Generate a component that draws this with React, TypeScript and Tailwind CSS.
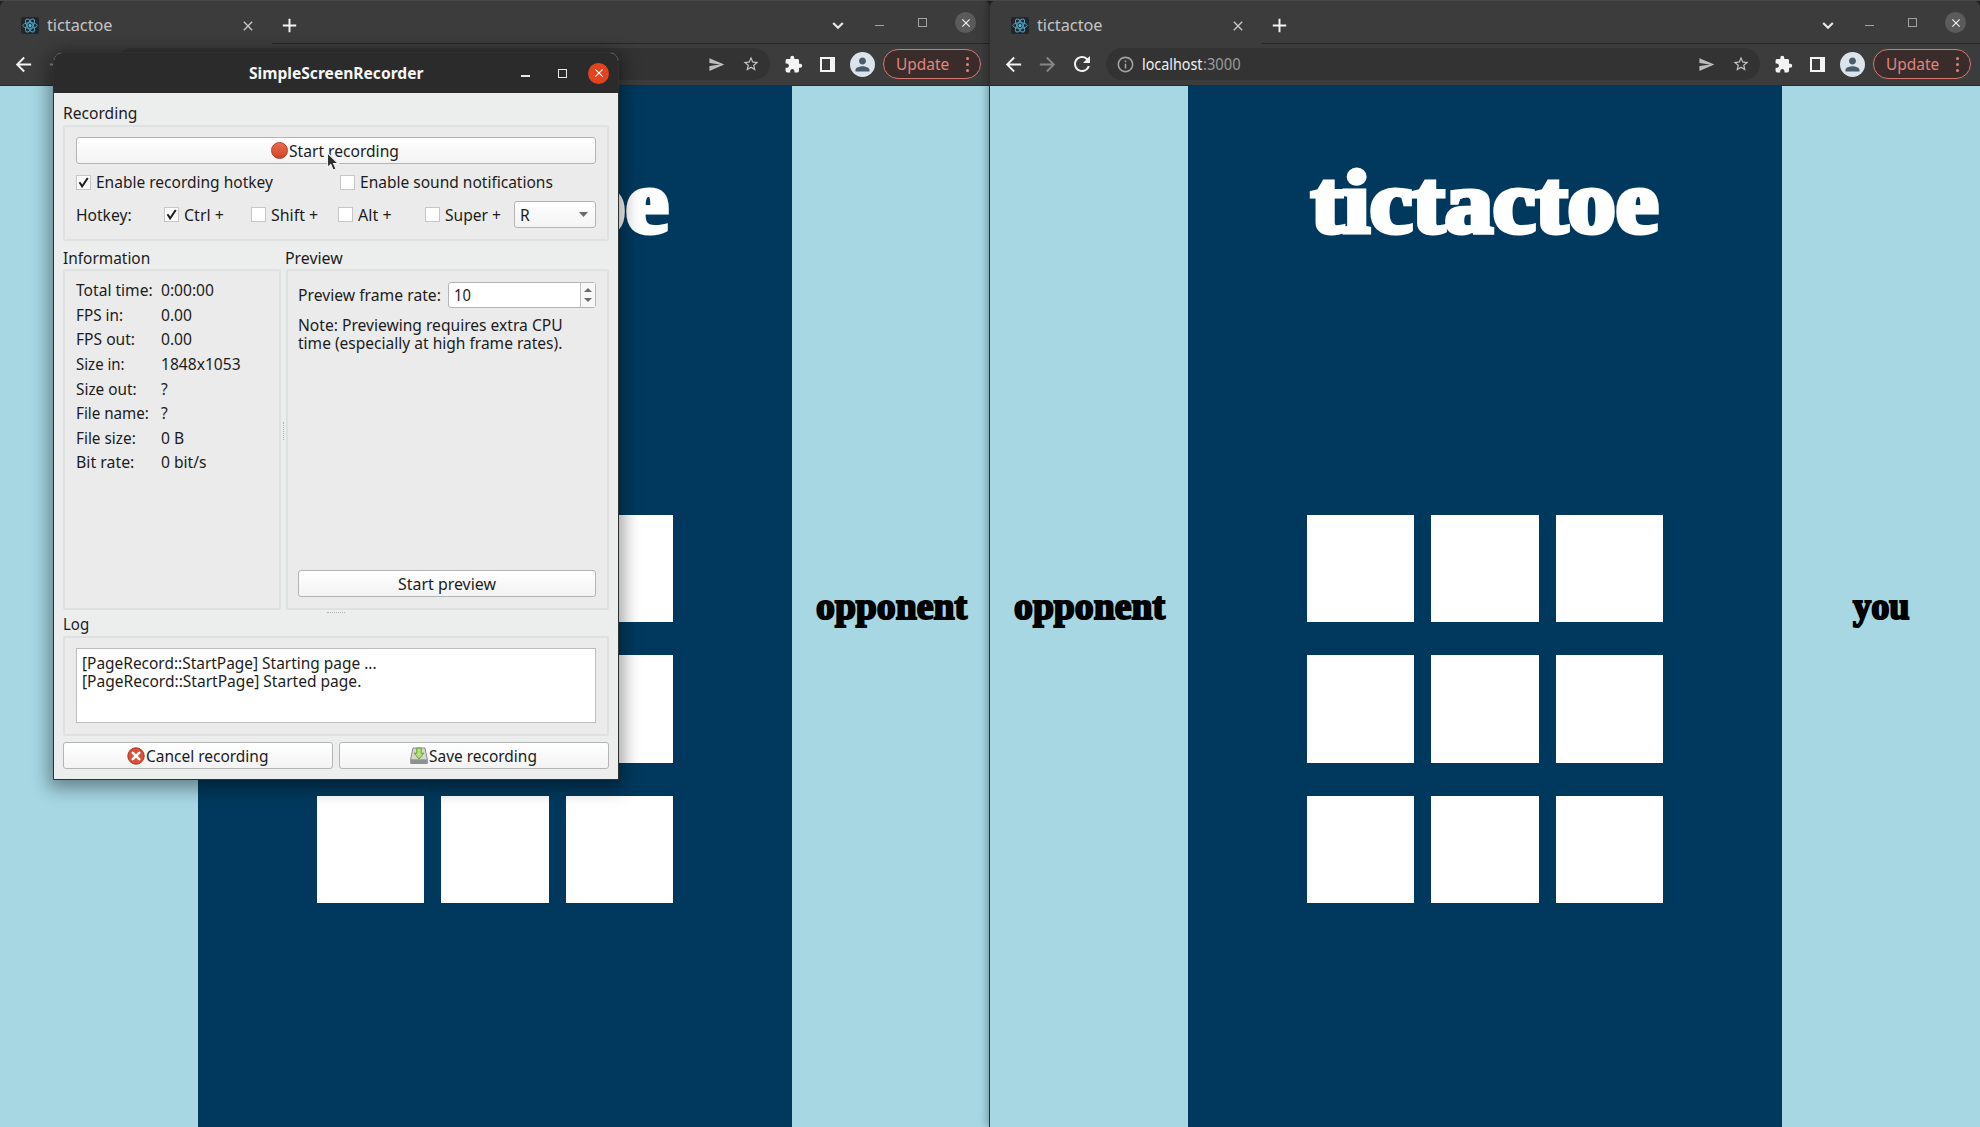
import React, { useLayoutEffect, useRef, useState } from "react";
import {
  MdArrowBack, MdArrowForward, MdRefresh, MdInfoOutline, MdSend, MdStarBorder,
  MdExtension, MdPerson, MdClose, MdAdd,
} from "react-icons/md";

/** Single line of text condensed or expanded to an exact width. */
function Fit({ w, children, className = "" }: { w: number; children: React.ReactNode; className?: string }) {
  const ref = useRef<HTMLSpanElement>(null);
  const [scale, setScale] = useState(1);
  useLayoutEffect(() => {
    if (ref.current) setScale(w / ref.current.offsetWidth);
  }, [w]);
  return (
    <span className={`inline-block shrink-0 whitespace-nowrap text-left ${className}`} style={{ width: w }}>
      <span ref={ref} className="inline-block origin-left" style={{ transform: `scaleX(${scale})` }}>
        {children}
      </span>
    </span>
  );
}

function Favicon() {
  return (
    <svg className="h-[17px] w-[18px] shrink-0" viewBox="0 0 18 17">
      <rect width="18" height="17" rx="2" fill="#20262b" />
      <g fill="none" stroke="#4fa3c2" strokeWidth="1">
        <ellipse cx="9" cy="8.5" rx="7.2" ry="2.8" />
        <ellipse cx="9" cy="8.5" rx="7.2" ry="2.8" transform="rotate(60 9 8.5)" />
        <ellipse cx="9" cy="8.5" rx="7.2" ry="2.8" transform="rotate(120 9 8.5)" />
      </g>
      <circle cx="9" cy="8.5" r="1.5" fill="#5fc4e4" />
    </svg>
  );
}

function TabStrip() {
  return (
    <div className="relative flex h-11 items-start border-t border-[#484848]">
      <div className="flex h-[49px] w-[272px] items-center pl-[21px]">
        <Favicon />
        <Fit w={66} className="-mt-px ml-2 text-[16px] leading-5 text-[#c4c4c4]">tictactoe</Fit>
        <MdClose className="ml-[127px] size-[16px] text-[#c8c8c8]" />
      </div>
      <MdAdd className="ml-[6px] mt-[13px] size-[23px] text-[#f4f4f4]" />
      <div className="flex-1" />
      <svg className="mt-[20px] h-[9px] w-[12px]" viewBox="0 0 12 9">
        <path d="M1.2 2l4.8 4.8L10.8 2" fill="none" stroke="#e8e8e8" strokeWidth="2.2" />
      </svg>
      <div className="ml-[31px] mt-[24px] h-px w-[9px] bg-[#a2a2a2]" />
      <div className="ml-[34px] mt-[17px] size-[9px] border border-[#a2a2a2]" />
      <div className="ml-[28px] mr-[14px] mt-[11px] flex size-[21px] items-center justify-center rounded-full bg-[#5b5b5b]">
        <MdClose className="size-[14px] text-[#f0f0f0]" />
      </div>
      <div className="absolute bottom-0 left-[272px] right-0 h-px bg-[#262626]" />
    </div>
  );
}

function Toolbar() {
  return (
    <div className="flex h-[42px] items-center border-b border-[#2a2a2a] pb-px">
      <MdArrowBack className="ml-[12px] size-[23px] text-[#f2f2f2]" />
      <MdArrowForward className="ml-[11px] size-[23px] text-[#868686]" />
      <MdRefresh className="ml-[11px] size-[24px] text-[#f2f2f2]" />
      <div className="ml-[12px] flex h-8 w-[654px] items-center rounded-full bg-[#333333]">
        <MdInfoOutline className="ml-[10px] size-[19px] text-[#a2a2a2]" />
        <Fit w={61} className="ml-[7px] text-[15.5px] leading-5 text-[#f0f0f0]">localhost</Fit>
        <Fit w={38} className="text-[15.5px] leading-5 text-[#9a9a9a]">:3000</Fit>
        <MdSend className="ml-auto size-[17px] text-[#bcbcbc]" />
        <MdStarBorder className="ml-[17px] mr-[10px] size-[18px] text-[#c4c4c4]" />
      </div>
      <MdExtension className="ml-[14px] size-[19px] text-[#f4f4f4]" />
      <div className="ml-[17px] h-[15px] w-[15px] border-2 border-r-[5px] border-[#f4f4f4]" />
      <div className="ml-[15px] flex size-[25px] items-center justify-center rounded-full bg-[#dde3ea]">
        <MdPerson className="size-[21px] text-[#475c6c]" />
      </div>
      <div className="ml-[8px] flex h-[30px] w-[98px] items-center rounded-full border border-[#d8776f] bg-[#3a2c2b]">
        <Fit w={53} className="ml-[12px] text-[16px] leading-5 text-[#e0857d]">Update</Fit>
        <div className="ml-[17px] flex flex-col gap-[3px]">
          <div className="size-[3px] rounded-full bg-[#e0857d]" />
          <div className="size-[3px] rounded-full bg-[#e0857d]" />
          <div className="size-[3px] rounded-full bg-[#e0857d]" />
        </div>
      </div>
    </div>
  );
}

const serif = "font-['Liberation_Serif'] font-bold";

function Player({ name, w }: { name: string; w: number }) {
  return (
    <div className="flex flex-1 justify-center bg-[#a6d7e3] pt-[496px]">
      <Fit w={w} className={`${serif} text-[37px] leading-[50px] text-black [-webkit-text-stroke:2px_black]`}>{name}</Fit>
    </div>
  );
}

function Browser({ left, right, className = "" }: { left: [string, number]; right: [string, number]; className?: string }) {
  return (
    <div className={`flex h-full w-[990px] flex-col bg-[#3c3c3c] ${className}`}>
      <TabStrip />
      <Toolbar />
      <div className="flex flex-1">
        <Player name={left[0]} w={left[1]} />
        <div className="flex w-[594px] flex-col items-center bg-[#00395d]">
          <h1 className="mt-[62px] h-[110px]">
            <Fit w={348} className={`${serif} text-[88px] leading-[109px] text-white [-webkit-text-stroke:5px_white]`}>tictactoe</Fit>
          </h1>
          <div className="mt-[257px] grid grid-cols-3 gap-x-[17px] gap-y-[33px]">
            {Array.from({ length: 9 }, (_, i) => (
              <div key={i} className="h-[107.4px] w-[107.4px] bg-white" />
            ))}
          </div>
        </div>
        <Player name={right[0]} w={right[1]} />
      </div>
    </div>
  );
}

function Check({ on, w, children }: { on?: boolean; w: number; children: string }) {
  return (
    <label className="flex items-center">
      <span className="flex size-[15px] items-center justify-center border border-[#c6c6c6] bg-white">
        {on && (
          <svg className="size-[11px]" viewBox="0 0 11 11">
            <path d="M1.5 5.2l2.6 4.2L9.8 1" fill="none" stroke="#222" strokeWidth="2" />
          </svg>
        )}
      </span>
      <Fit w={w} className="ml-[5px]">{children}</Fit>
    </label>
  );
}

const box = "rounded-[2px] border-2 border-[#dfe0e0] bg-[#ebebeb]";
const button = "flex items-center justify-center rounded-[3px] border border-[#b4b4b4] bg-gradient-to-b from-white to-[#f3f3f3]";

const info: [string, number, string, number][] = [
  ["Total time:", 77, "0:00:00", 53],
  ["FPS in:", 47, "0.00", 31],
  ["FPS out:", 59, "0.00", 31],
  ["Size in:", 49, "1848x1053", 80],
  ["Size out:", 61, "?", 7],
  ["File name:", 73, "?", 7],
  ["File size:", 60, "0 B", 23],
  ["Bit rate:", 58, "0 bit/s", 46],
];

function Recorder() {
  return (
    <div className="absolute left-[53px] top-[52px] flex h-[728px] w-[566px] flex-col rounded-t-[9px] border border-[#303030] bg-[#eceeed] text-[15.6px] leading-[18px] text-[#1c1c1c] shadow-[0_4px_18px_4px_rgba(0,0,0,0.4)]">
      <div className="flex h-10 shrink-0 items-center rounded-t-[8px] bg-[#2b2b2b] text-[#f5f5f5]">
        <Fit w={174} className="ml-[195px] font-bold">SimpleScreenRecorder</Fit>
        <div className="ml-[98px] mt-[5px] h-[2px] w-[9px] bg-[#e8e8e8]" />
        <div className="ml-[28px] size-[9px] border border-[#e8e8e8]" />
        <div className="ml-[21px] flex size-[21px] items-center justify-center rounded-full bg-[#e4431e]">
          <MdClose className="size-[14px] text-white" />
        </div>
      </div>

      <div className="flex flex-1 flex-col px-[9px]">
        <Fit w={74} className="mt-[11px]">Recording</Fit>
        <div className={`mt-[3px] flex h-[116px] flex-col pl-[11px] pr-[11px] pt-[10px] ${box}`}>
          <div className={`relative h-[27px] ${button}`}>
            <span className="mr-[1px] size-[17px] rounded-full border border-[#a8402a] bg-gradient-to-b from-[#ea6a4c] to-[#cf4526]" />
            <Fit w={110} className="mr-[2px]">Start recording</Fit>
            <svg className="absolute left-[249px] top-[14px] h-[21px] w-[14px]" viewBox="0 0 14 21">
              <path d="M1.5 1v14.5l3.3-3 2.4 5.6 2.8-1.2-2.4-5.4h4.6z" fill="#2d2d2d" stroke="#f2f2f2" strokeWidth="1.1" />
            </svg>
          </div>
          <div className="mt-[9px] grid grid-cols-[264px_1fr]">
            <Check on w={177}>Enable recording hotkey</Check>
            <Check w={193}>Enable sound notifications</Check>
          </div>
          <div className="mt-[10px] flex h-[27px] items-center">
            <div className="w-[88px]"><Fit w={56}>Hotkey:</Fit></div>
            <div className="w-[87px]"><Check on w={40}>Ctrl +</Check></div>
            <div className="w-[87px]"><Check w={47}>Shift +</Check></div>
            <div className="w-[87px]"><Check w={34}>Alt +</Check></div>
            <div className="w-[89px]"><Check w={56}>Super +</Check></div>
            <div className={`h-[27px] flex-1 pl-[5px] pr-[7px] ${button}`}>
              <Fit w={10}>R</Fit>
              <svg className="ml-auto h-[5px] w-[9px]" viewBox="0 0 9 5"><path d="M0 0h9L4.5 5z" fill="#6a6a6a" /></svg>
            </div>
          </div>
        </div>

        <div className="mt-[8px] flex h-[361px]">
          <div className="flex w-[218px] flex-col">
            <Fit w={87}>Information</Fit>
            <div className={`mt-[2px] flex-1 pl-[11px] pt-[7px] ${box}`}>
              {info.map(([label, lw, value, vw]) => (
                <div key={label} className="grid h-[24.6px] grid-cols-[85px_1fr] items-center">
                  <Fit w={lw}>{label}</Fit>
                  <Fit w={vw}>{value}</Fit>
                </div>
              ))}
            </div>
          </div>
          <div className="flex w-[5px] items-start justify-center pt-[173px]">
            <div className="h-[18px] border-l border-dotted border-[#b0b0b0]" />
          </div>
          <div className="flex flex-1 flex-col">
            <Fit w={58} className="-ml-px">Preview</Fit>
            <div className={`mt-[2px] flex flex-1 flex-col pb-[11px] pl-[10px] pr-[11px] pt-[11px] ${box}`}>
              <div className="flex items-center">
                <Fit w={143}>Preview frame rate:</Fit>
                <div className="ml-[7px] flex h-[26px] flex-1 items-stretch rounded-[3px] border border-[#b4b4b4] bg-white">
                  <Fit w={17} className="ml-[5px] self-center">10</Fit>
                  <div className="ml-auto flex w-[15px] flex-col items-center justify-center gap-[6px] border-l border-[#c0c0c0] bg-[#f7f7f7]">
                    <svg className="h-[4px] w-[8px]" viewBox="0 0 8 4"><path d="M0 4h8L4 0z" fill="#6a6a6a" /></svg>
                    <svg className="h-[4px] w-[8px]" viewBox="0 0 8 4"><path d="M0 0h8L4 4z" fill="#6a6a6a" /></svg>
                  </div>
                </div>
              </div>
              <Fit w={265} className="mt-[8px]">Note: Previewing requires extra CPU</Fit>
              <Fit w={264}>time (especially at high frame rates).</Fit>
              <div className={`mt-auto h-[27px] ${button}`}><Fit w={98}>Start preview</Fit></div>
            </div>
          </div>
        </div>

        <div className="flex h-[5px] items-center justify-center">
          <div className="w-[18px] border-t border-dotted border-[#b0b0b0]" />
        </div>
        <Fit w={26}>Log</Fit>
        <div className={`mt-[3px] h-[100px] pl-[11px] pr-[11px] pt-[10px] ${box}`}>
          <div className="flex h-[75px] flex-col border border-[#bdbdbd] bg-white pl-[5px] pt-[5px]">
            <Fit w={295}>[PageRecord::StartPage] Starting page ...</Fit>
            <Fit w={279}>[PageRecord::StartPage] Started page.</Fit>
          </div>
        </div>
        <div className="mt-[6px] grid h-[27px] grid-cols-2 gap-[6px]">
          <div className={`pr-[2px] ${button}`}>
            <svg className="mr-[1px] size-[18px]" viewBox="0 0 18 18">
              <circle cx="9" cy="9" r="8.2" fill="#d9513a" stroke="#a53a28" />
              <path d="M5.8 5.8l6.4 6.4M12.2 5.8l-6.4 6.4" stroke="#fff" strokeWidth="2.6" strokeLinecap="round" />
            </svg>
            <Fit w={122}>Cancel recording</Fit>
          </div>
          <div className={`pr-[2px] ${button}`}>
            <svg className="mr-px size-[18px]" viewBox="0 0 18 18">
              <path d="M3 1h12l2.3 11v4.5H.7V12z" fill="#d6d6d2" stroke="#8c8c8c" />
              <path d="M1 12.3h16v4.2H1z" fill="#8f918e" />
              <path d="M6.8 1h4.4v5.2h2.6L9 12 4.2 6.2h2.6z" fill="#b5e07a" stroke="#62a32a" />
            </svg>
            <Fit w={108}>Save recording</Fit>
          </div>
        </div>
      </div>
    </div>
  );
}

export default function App() {
  return (
    <div className="relative flex h-[1127px] w-[1980px] overflow-hidden bg-[#222] font-['Noto_Sans',sans-serif]">
      <Browser left={["you", 57]} right={["opponent", 151]} className="rounded-t-[8px]" />
      <Browser
        left={["opponent", 151]}
        right={["you", 57]}
        className="relative rounded-t-[8px] shadow-[-1px_0_0_#26323a,-2px_0_8px_rgba(0,0,0,0.35)]"
      />
      <Recorder />
    </div>
  );
}
